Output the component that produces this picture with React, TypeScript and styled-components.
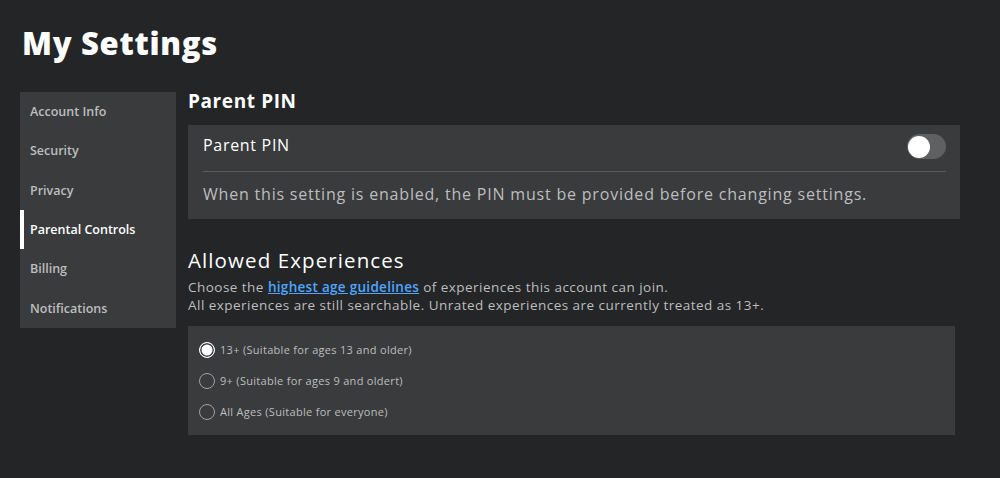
import React from "react";
import styled, { createGlobalStyle } from "styled-components";

const Global = createGlobalStyle`
  html, body { margin: 0; padding: 0; background: #232527; }
  body { font-family: "Open Sans", "Liberation Sans", sans-serif; color: #fff; }
  * { box-sizing: border-box; }
`;

const Page = styled.div`
  width: 1000px;
  height: 478px;
  background: #232527;
  padding: 22px 40px 0 20px;
  overflow: hidden;
`;

const Title = styled.h1`
  margin: 0 0 0 2px;
  font-size: 31px;
  font-weight: 800;
  line-height: 42px;
  letter-spacing: 0.7px;
  color: #fff;
`;

const Layout = styled.div`
  display: flex;
  align-items: flex-start;
  gap: 12px;
  margin-top: 28px;
`;

const Sidebar = styled.nav`
  width: 156px;
  background: #393b3d;
  display: flex;
  flex-direction: column;
`;

const NavItem = styled.div<{ $active?: boolean }>`
  position: relative;
  height: 39.33px;
  display: flex;
  align-items: center;
  padding-left: 10px;
  font-size: 12.5px;
  font-weight: 600;
  color: ${(p) => (p.$active ? "#ffffff" : "#bdbebe")};
  &::before {
    content: "";
    display: ${(p) => (p.$active ? "block" : "none")};
    position: absolute;
    left: 0;
    top: 0;
    bottom: 0;
    width: 4px;
    background: #fff;
  }
`;

const Main = styled.div`
  flex: 1;
  display: flex;
  flex-direction: column;
`;

const SectionHeading = styled.h2`
  margin: 0;
  font-size: 19px;
  font-weight: 700;
  line-height: 18px;
  letter-spacing: 0.6px;
  color: #fff;
`;

const PinCard = styled.div`
  margin-top: 15px;
  background: #393b3d;
  padding: 0 14px 0 15px;
  height: 94px;
  display: flex;
  flex-direction: column;
`;

const PinRow = styled.div`
  display: flex;
  align-items: flex-start;
  justify-content: space-between;
  height: 47px;
  border-bottom: 1px solid #5a5c5e;
  padding-top: 9px;
`;

const PinLabel = styled.span`
  font-size: 16px;
  line-height: 22px;
  letter-spacing: 0.7px;
  color: #fff;
`;

const Toggle = styled.div`
  width: 39px;
  height: 25px;
  border-radius: 13px;
  background: #5f6062;
  display: flex;
  align-items: center;
  padding-left: 1px;
`;

const Knob = styled.div`
  width: 22px;
  height: 22px;
  border-radius: 50%;
  background: #fff;
`;

const PinDesc = styled.p`
  margin: 0;
  padding-top: 11px;
  font-size: 16px;
  line-height: 22px;
  color: #bdbebe;
  letter-spacing: 0.8px;
`;

const SubHeading = styled.h3`
  margin: 30px 0 0;
  font-size: 20.5px;
  font-weight: 500;
  line-height: 22px;
  letter-spacing: 1.1px;
  color: #fff;
`;

const Lead = styled.p`
  margin: 7px 0 0;
  font-size: 13.5px;
  line-height: 18px;
  letter-spacing: 0.47px;
  color: #bdbebe;
`;

const Link = styled.a`
  color: #4fa5ff;
  text-decoration: underline;
  font-weight: 600;
  letter-spacing: 0.3px;
`;

const RadioCard = styled.div`
  margin-top: 12px;
  width: 767px;
  height: 109px;
  background: #393b3d;
  padding: 8px 11px;
  display: flex;
  flex-direction: column;
`;

const RadioRow = styled.label`
  display: flex;
  align-items: center;
  gap: 5px;
  height: 31px;
  font-size: 11px;
  letter-spacing: 0.3px;
  color: #bdbebe;
`;

const RadioCircle = styled.span<{ $checked?: boolean }>`
  width: 16px;
  height: 16px;
  border-radius: 50%;
  border: 1.5px solid ${(p) => (p.$checked ? "#ffffff" : "#a0a1a2")};
  background: ${(p) => (p.$checked ? "#ffffff" : "transparent")};
  box-shadow: ${(p) => (p.$checked ? "inset 0 0 0 1.5px #393b3d" : "none")};
  flex-shrink: 0;
`;

const navItems = ["Account Info", "Security", "Privacy", "Parental Controls", "Billing", "Notifications"];
const options = [
  "13+ (Suitable for ages 13 and older)",
  "9+ (Suitable for ages 9 and oldert)",
  "All Ages (Suitable for everyone)",
];

export default function App() {
  return (
    <Page>
      <Global />
      <Title>My Settings</Title>
      <Layout>
        <Sidebar>
          {navItems.map((n) => (
            <NavItem key={n} $active={n === "Parental Controls"}>
              {n}
            </NavItem>
          ))}
        </Sidebar>
        <Main>
          <SectionHeading>Parent PIN</SectionHeading>
          <PinCard>
            <PinRow>
              <PinLabel>Parent PIN</PinLabel>
              <Toggle>
                <Knob />
              </Toggle>
            </PinRow>
            <PinDesc>When this setting is enabled, the PIN must be provided before changing settings.</PinDesc>
          </PinCard>
          <SubHeading>Allowed Experiences</SubHeading>
          <Lead>
            Choose the <Link>highest age guidelines</Link> of experiences this account can join.
            <br />
            All experiences are still searchable. Unrated experiences are currently treated as 13+.
          </Lead>
          <RadioCard>
            {options.map((o, i) => (
              <RadioRow key={o}>
                <RadioCircle $checked={i === 0} />
                {o}
              </RadioRow>
            ))}
          </RadioCard>
        </Main>
      </Layout>
    </Page>
  );
}
